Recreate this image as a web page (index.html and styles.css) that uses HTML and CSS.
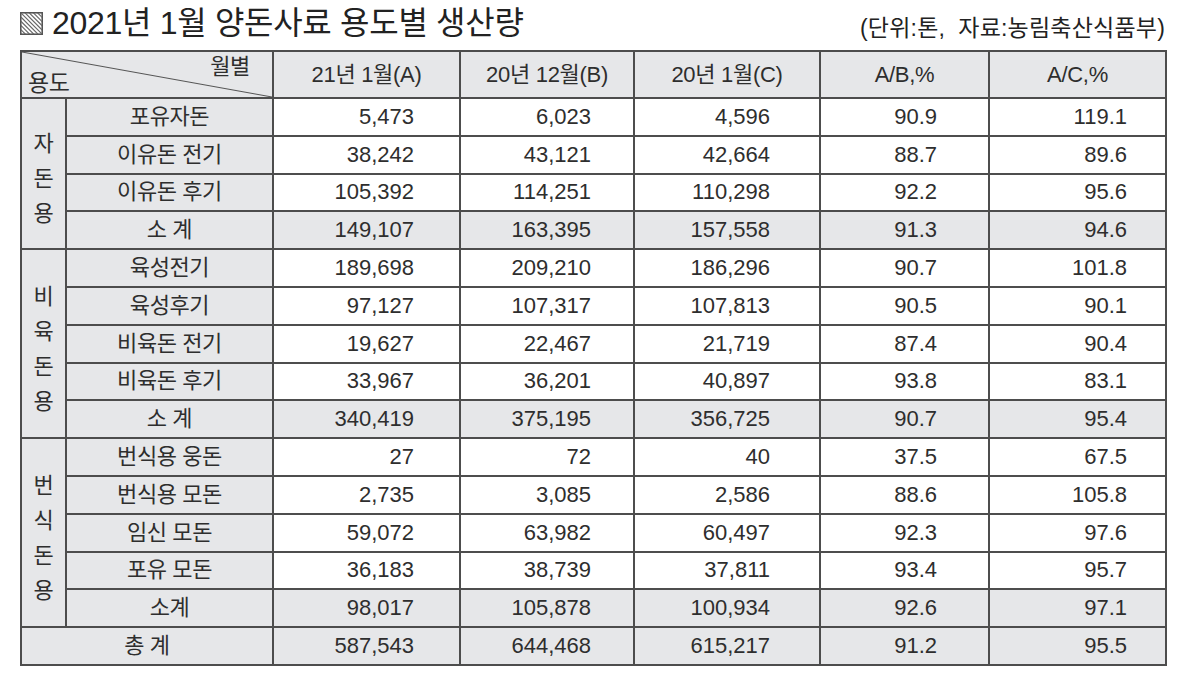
FILE: index.html
```html
<!DOCTYPE html>
<html lang="ko">
<head>
<meta charset="utf-8">
<link rel="stylesheet" href="styles.css">
</head>
<body>
<div class="page">
  <div class="head">
    <h1 class="title">
      <svg class="mark" width="23" height="23" viewBox="0 0 22 22">
        <defs>
          <clipPath id="c"><rect x="1" y="1" width="20" height="20"/></clipPath>
        </defs>
        <rect x="0.75" y="0.75" width="20.5" height="20.5" fill="#fff" stroke="#555" stroke-width="1.5"/>
        <g clip-path="url(#c)" stroke="#666" stroke-width="1.1">
          <line x1="-20" y1="-16" x2="20" y2="24"/>
          <line x1="-16" y1="-16" x2="24" y2="24"/>
          <line x1="-12" y1="-16" x2="28" y2="24"/>
          <line x1="-8" y1="-16" x2="32" y2="24"/>
          <line x1="-4" y1="-16" x2="36" y2="24"/>
          <line x1="0" y1="-16" x2="40" y2="24"/>
          <line x1="-24" y1="-16" x2="16" y2="24"/>
          <line x1="-28" y1="-16" x2="12" y2="24"/>
          <line x1="-32" y1="-16" x2="8" y2="24"/>
          <line x1="-36" y1="-16" x2="4" y2="24"/>
          <line x1="-40" y1="-16" x2="0" y2="24"/>
        </g>
      </svg>
      <span>2021년 1월 양돈사료 용도별 생산량</span>
    </h1>
    <div class="note">(단위:톤,&nbsp; 자료:농림축산식품부)</div>
  </div>

  <table class="tbl">
    <colgroup>
      <col class="c-grp"><col class="c-lab"><col class="c-a"><col class="c-b"><col class="c-c"><col class="c-ab"><col class="c-ac">
    </colgroup>
    <thead>
      <tr class="hr">
        <th colspan="2" class="diag"><div class="diag-in"><span class="d-top">월별</span><span class="d-bot">용도</span></div></th>
        <th>21년 1월(A)</th>
        <th>20년 12월(B)</th>
        <th>20년 1월(C)</th>
        <th>A/B,%</th>
        <th>A/C,%</th>
      </tr>
    </thead>
    <tbody>
      <tr>
        <td rowspan="4" class="grp g1"><span>자</span><span>돈</span><span>용</span></td>
        <td class="lab">포유자돈</td><td class="n a">5,473</td><td class="n b">6,023</td><td class="n c">4,596</td><td class="n ab">90.9</td><td class="n ac">119.1</td>
      </tr>
      <tr><td class="lab">이유돈 전기</td><td class="n a">38,242</td><td class="n b">43,121</td><td class="n c">42,664</td><td class="n ab">88.7</td><td class="n ac">89.6</td></tr>
      <tr><td class="lab">이유돈 후기</td><td class="n a">105,392</td><td class="n b">114,251</td><td class="n c">110,298</td><td class="n ab">92.2</td><td class="n ac">95.6</td></tr>
      <tr class="sub"><td class="lab">소 계</td><td class="n a">149,107</td><td class="n b">163,395</td><td class="n c">157,558</td><td class="n ab">91.3</td><td class="n ac">94.6</td></tr>

      <tr>
        <td rowspan="5" class="grp"><span>비</span><span>육</span><span>돈</span><span>용</span></td>
        <td class="lab">육성전기</td><td class="n a">189,698</td><td class="n b">209,210</td><td class="n c">186,296</td><td class="n ab">90.7</td><td class="n ac">101.8</td>
      </tr>
      <tr><td class="lab">육성후기</td><td class="n a">97,127</td><td class="n b">107,317</td><td class="n c">107,813</td><td class="n ab">90.5</td><td class="n ac">90.1</td></tr>
      <tr><td class="lab">비육돈 전기</td><td class="n a">19,627</td><td class="n b">22,467</td><td class="n c">21,719</td><td class="n ab">87.4</td><td class="n ac">90.4</td></tr>
      <tr><td class="lab">비육돈 후기</td><td class="n a">33,967</td><td class="n b">36,201</td><td class="n c">40,897</td><td class="n ab">93.8</td><td class="n ac">83.1</td></tr>
      <tr class="sub"><td class="lab">소 계</td><td class="n a">340,419</td><td class="n b">375,195</td><td class="n c">356,725</td><td class="n ab">90.7</td><td class="n ac">95.4</td></tr>

      <tr>
        <td rowspan="5" class="grp"><span>번</span><span>식</span><span>돈</span><span>용</span></td>
        <td class="lab">번식용 웅돈</td><td class="n a">27</td><td class="n b">72</td><td class="n c">40</td><td class="n ab">37.5</td><td class="n ac">67.5</td>
      </tr>
      <tr><td class="lab">번식용 모돈</td><td class="n a">2,735</td><td class="n b">3,085</td><td class="n c">2,586</td><td class="n ab">88.6</td><td class="n ac">105.8</td></tr>
      <tr><td class="lab">임신 모돈</td><td class="n a">59,072</td><td class="n b">63,982</td><td class="n c">60,497</td><td class="n ab">92.3</td><td class="n ac">97.6</td></tr>
      <tr><td class="lab">포유 모돈</td><td class="n a">36,183</td><td class="n b">38,739</td><td class="n c">37,811</td><td class="n ab">93.4</td><td class="n ac">95.7</td></tr>
      <tr class="sub"><td class="lab">소계</td><td class="n a">98,017</td><td class="n b">105,878</td><td class="n c">100,934</td><td class="n ab">92.6</td><td class="n ac">97.1</td></tr>

      <tr class="sub total"><td colspan="2" class="lab">총 계</td><td class="n a">587,543</td><td class="n b">644,468</td><td class="n c">615,217</td><td class="n ab">91.2</td><td class="n ac">95.5</td></tr>
    </tbody>
  </table>
</div>
</body>
</html>
```

FILE: styles.css
```css
* { box-sizing: border-box; }

html, body {
  margin: 0;
  padding: 0;
  background: #ffffff;
}

body {
  font-family: "Liberation Sans", "Noto Sans CJK KR", sans-serif;
  color: #2e2e2e;
}

.page {
  padding: 0 0 0 20px;
  width: 1180px;
}

.head {
  display: flex;
  justify-content: space-between;
  align-items: flex-start;
  height: 50px;
  width: 1145px;
}

.title {
  margin: 0;
  display: flex;
  align-items: center;
  gap: 9px;
  font-size: 32px;
  font-weight: normal;
  line-height: 44px;
  margin-top: 1px;
  color: #222;
  letter-spacing: -0.3px;
}

.mark {
  display: block;
  flex: none;
}

.note {
  font-size: 23px;
  line-height: 30px;
  margin-top: 13px;
  color: #222;
  letter-spacing: 0.2px;
}

.tbl {
  border-collapse: collapse;
  table-layout: fixed;
  width: 1145px;
  font-size: 22px;
}

.c-grp { width: 45px; }
.c-lab { width: 207px; }
.c-a { width: 187px; }
.c-b { width: 174px; }
.c-c { width: 186px; }
.c-ab { width: 169px; }
.c-ac { width: 177px; }

.tbl th,
.tbl td {
  border: 2px solid #4d4d4d;
  padding: 0;
  line-height: 26px;
  white-space: nowrap;
}

.tbl th {
  background: #e6e7e9;
  font-weight: normal;
  height: 47px;
  text-align: center;
  letter-spacing: -0.3px;
}

.tbl tbody tr {
  height: 37.8px;
}

.tbl th.diag {
  background: linear-gradient(to top right, #e6e7e9 calc(50% - 1px), #555 50%, #e6e7e9 calc(50% + 1px));
}

.diag-in {
  display: flex;
  flex-direction: column;
  height: 45px;
}

.d-top {
  align-self: flex-end;
  padding-right: 22px;
  line-height: 22px;
  margin-top: 4px;
}

.d-bot {
  align-self: flex-start;
  padding-left: 6px;
  line-height: 22px;
  margin-top: -6px;
  font-size: 23px;
}

.lab {
  background: #e6e7e9;
  text-align: center;
  letter-spacing: -0.4px;
}

.grp {
  background: #e6e7e9;
  text-align: center;
  vertical-align: middle;
  padding-top: 10px !important;
}

.grp span {
  display: block;
  line-height: 35px;
}

.n {
  text-align: right;
  background: #ffffff;
}

.sub td { background: #e6e7e9; }

.n.a { padding-right: 45px; }
.n.b { padding-right: 42px; }
.n.c { padding-right: 49px; }
.n.ab { padding-right: 51px; }
.n.ac { padding-right: 38px; }
```
